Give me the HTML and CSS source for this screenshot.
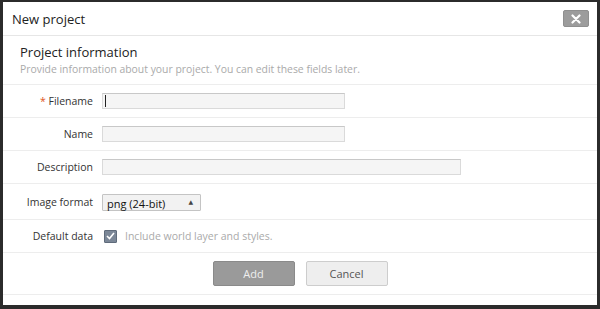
FILE: index.html
```html
<!DOCTYPE html>
<html lang="en">
<head>
  <meta charset="UTF-8" />
  <title>New project</title>
  <link rel="stylesheet" href="styles.css">
</head>
<body>
  <div class="dialog">
    <div class="dialog-header">
      <h1>New project</h1>
      <button class="close-btn" type="button">
        <svg width="10" height="10" viewBox="0 0 10 10"><path d="M1.5 1.5 L8.5 8.5 M8.5 1.5 L1.5 8.5" stroke="#fff" stroke-width="2.2" stroke-linecap="round"/></svg>
      </button>
    </div>

    <div class="intro">
      <h2>Project information</h2>
      <p>Provide information about your project. You can edit these fields later.</p>
    </div>

    <form class="fields">
      <div class="row">
        <label class="label"><span class="req">*</span> Filename</label>
        <div class="input short focused"><span class="caret"></span></div>
      </div>
      <div class="row">
        <label class="label">Name</label>
        <div class="input short"></div>
      </div>
      <div class="row">
        <label class="label">Description</label>
        <div class="input long"></div>
      </div>
      <div class="row tall">
        <label class="label">Image format</label>
        <div class="select">
          <span class="select-text">png (24-bit)</span>
          <span class="select-arrow">&#9650;</span>
        </div>
      </div>
      <div class="row">
        <label class="label">Default data</label>
        <span class="checkbox">
          <svg width="9" height="8" viewBox="0 0 9 8"><path d="M1 4 L3.5 6.5 L8 1" fill="none" stroke="#fff" stroke-width="1.6"/></svg>
        </span>
        <span class="hint">Include world layer and styles.</span>
      </div>
      <div class="actions">
        <button class="btn btn-primary" type="button">Add</button>
        <button class="btn" type="button">Cancel</button>
      </div>
    </form>
  </div>
</body>
</html>
```

FILE: styles.css
```css
body {
  margin: 0;
  font-family: 'Open Sans', 'DejaVu Sans', sans-serif;
  background-color: #2a2a2a;
  color: #333;
}

.dialog {
  box-sizing: border-box;
  height: 309px;
  background-color: #fff;
  border-style: solid;
  border-color: #2b2b2b;
  border-width: 2px 3px 4px 3px;
}

/* Header */
.dialog-header {
  height: 33px;
  display: flex;
  align-items: center;
  justify-content: space-between;
  padding: 0 8px 0 9px;
  border-bottom: 1px solid #e6e6e6;
}

.dialog-header h1 {
  margin: 0;
  font-size: 13px;
  font-weight: normal;
  color: #222;
}

.close-btn {
  width: 26px;
  height: 17px;
  padding: 0;
  border: 1px solid #8f8f8f;
  border-radius: 2px;
  background-color: #9c9c9c;
  display: flex;
  align-items: center;
  justify-content: center;
}

/* Intro */
.intro {
  height: 49px;
  padding: 7px 17px 0;
  box-sizing: border-box;
  border-bottom: 1px solid #ededed;
}

.intro h2 {
  margin: 0;
  font-size: 13px;
  font-weight: normal;
  color: #222;
  line-height: 18px;
}

.intro p {
  margin: 0;
  font-size: 10.4px;
  color: #aaa;
  line-height: 16px;
}

/* Rows */
.row {
  height: 32px;
  display: flex;
  align-items: center;
  border-bottom: 1px solid #ededed;
}

.row.tall {
  height: 35px;
}

.label {
  width: 90px;
  flex: none;
  text-align: right;
  padding-right: 9px;
  font-size: 10.5px;
  color: #333;
}

.req {
  color: #e0541b;
}

.input {
  box-sizing: border-box;
  height: 16px;
  background-color: #f5f5f5;
  border: 1px solid #dadada;
  border-top-color: #c8c8c8;
  position: relative;
}

.input.short {
  width: 243px;
}

.input.long {
  width: 359px;
}

.caret {
  position: absolute;
  left: 2px;
  top: 1px;
  width: 1px;
  height: 12px;
  background-color: #222;
}

.select {
  box-sizing: border-box;
  width: 99px;
  height: 17px;
  margin-top: 2px;
  background-color: #f2f2f2;
  border: 1px solid #c4c4c4;
  border-radius: 1px;
  display: flex;
  justify-content: space-between;
  align-items: flex-end;
}

.select-text {
  font-size: 11px;
  line-height: 13px;
  padding-left: 4px;
  color: #111;
}

.select-arrow {
  align-self: flex-start;
  font-size: 6px;
  color: #444;
  padding: 3px 7px 0 0;
}

.checkbox {
  width: 11px;
  height: 11px;
  margin-left: 2px;
  background-color: #7b8797;
  border: 1px solid #5f6b7b;
  border-radius: 1px;
  display: flex;
  align-items: center;
  justify-content: center;
}

.hint {
  margin-left: 8px;
  font-size: 10.5px;
  color: #aaa;
}

/* Buttons */
.actions {
  height: 41px;
  display: flex;
  justify-content: center;
  align-items: center;
  gap: 11px;
  border-bottom: 1px solid #ededed;
}

.btn {
  box-sizing: border-box;
  width: 82px;
  height: 25px;
  font-family: inherit;
  font-size: 11px;
  color: #555;
  background-color: #eee;
  border: 1px solid #cdcdcd;
  border-radius: 2px;
}

.btn-primary {
  background-color: #9a9a9a;
  border-color: #8a8a8a;
  color: #eee;
}
```
